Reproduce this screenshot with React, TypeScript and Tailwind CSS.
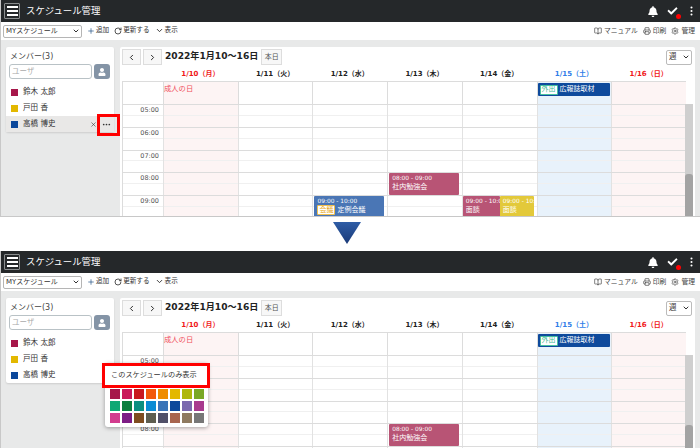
import React from 'react'
import { FaBell, FaCheck, FaUser } from 'react-icons/fa'
import { BsThreeDotsVertical, BsThreeDots } from 'react-icons/bs'
import { BookOpen, ChevronDown, ChevronLeft, ChevronRight, Plus, Printer, RotateCw, Settings, X } from 'lucide-react'

const days = [
    { label: '1/10（月）', color: 'text-[#f01818]', bg: 'bg-[#fdf4f4]' },
    { label: '1/11（火）', color: 'text-[#222]', bg: 'bg-white' },
    { label: '1/12（水）', color: 'text-[#222]', bg: 'bg-white' },
    { label: '1/13（木）', color: 'text-[#222]', bg: 'bg-white' },
    { label: '1/14（金）', color: 'text-[#222]', bg: 'bg-white' },
    { label: '1/15（土）', color: 'text-[#2f7de8]', bg: 'bg-[#e8f2fb]' },
    { label: '1/16（日）', color: 'text-[#f01818]', bg: 'bg-[#fdf4f4]' },
]

const hours = ['05:00', '06:00', '07:00', '08:00', '09:00']

const members = [
    { name: '鈴木 太郎', color: 'bg-[#a6174a]' },
    { name: '戸田 香', color: 'bg-[#e3b800]' },
    { name: '高橋 博史', color: 'bg-[#0c489b]' },
]

const palette = [
    ['bg-[#a6174a]', 'bg-[#c91a5b]', 'bg-[#c8181f]', 'bg-[#f25a0a]', 'bg-[#ef8c00]', 'bg-[#e3b800]', 'bg-[#afb70c]', 'bg-[#7aa825]'],
    ['bg-[#0fa874]', 'bg-[#0d7f3f]', 'bg-[#0c8f80]', 'bg-[#0b8bd4]', 'bg-[#3a74b8]', 'bg-[#0c489b]', 'bg-[#7a68ae]', 'bg-[#a83a8e]'],
    ['bg-[#d23c8e]', 'bg-[#7d1d85]', 'bg-[#7f4d20]', 'bg-[#5e5e50]', 'bg-[#505068]', 'bg-[#a8654f]', 'bg-[#8f7a60]', 'bg-[#777777]'],
]

const Header = () => (
    <div className="h-[22px] bg-[#25282a] flex items-center pl-[3px] text-white shrink-0">
        <div className="w-[16px] h-[16px] border border-[#8a8d8e] rounded-[1px] flex flex-col items-center justify-center gap-[2px]">
            <span className="w-[11px] h-[2px] bg-white" />
            <span className="w-[11px] h-[2px] bg-white" />
            <span className="w-[11px] h-[2px] bg-white" />
        </div>
        <span className="ml-[6px] text-[9.4px]">スケジュール管理</span>
        <div className="ml-auto flex items-center">
            <FaBell className="w-[10px] h-[11px]" />
            <div className="relative ml-[9px]">
                <FaCheck className="w-[11px] h-[10px]" />
                <span className="absolute right-[-3px] bottom-[-3px] w-[5px] h-[5px] rounded-full bg-[#f00]" />
            </div>
            <BsThreeDotsVertical className="ml-[8px] mr-[3px] w-[11px] h-[12px]" />
        </div>
    </div>
)

const Toolbar = () => (
    <div className="h-[18px] bg-white flex items-center pl-[2px] pr-[5px] text-[6.6px] text-[#333] shrink-0">
        <div className="w-[79px] h-[13px] border border-[#b5b5b5] rounded-[2px] flex items-center justify-between pl-[2px] pr-[1px] text-[7px]">
            <span>MYスケジュール</span>
            <ChevronDown className="w-[8px] h-[8px]" strokeWidth={3} />
        </div>
        <div className="ml-[5px] flex items-center">
            <Plus className="w-[8px] h-[8px] text-[#1c4c80]" strokeWidth={2} />
            <span className="ml-[1px]">追加</span>
        </div>
        <div className="ml-[5px] flex items-center">
            <RotateCw className="w-[8px] h-[8px]" strokeWidth={2.5} />
            <span className="ml-[1px]">更新する</span>
        </div>
        <div className="ml-[5px] flex items-center">
            <ChevronDown className="w-[9px] h-[9px]" strokeWidth={2.5} />
            <span className="ml-[1px]">表示</span>
        </div>
        <div className="ml-auto flex items-center text-[#444] text-[6.8px]">
            <BookOpen className="w-[8px] h-[8px]" />
            <span className="ml-[2px]">マニュアル</span>
            <Printer className="ml-[5px] w-[8px] h-[8px]" />
            <span className="ml-[2px]">印刷</span>
            <Settings className="ml-[5px] w-[8px] h-[8px]" />
            <span className="ml-[2px]">管理</span>
        </div>
    </div>
)

const Sidebar = ({ active }: { active: boolean }) => (
    <div className="relative z-10 w-[108px] self-start bg-white rounded-[2px] shadow-[0_1px_2px_rgba(0,0,0,0.12)]">
        <div className="pl-[4px] pt-[5px] text-[8px] leading-[10px] text-[#444]">メンバー(3)</div>
        <div className="flex pl-[3px] pt-[2px] gap-[2px]">
            <div className="w-[83px] h-[15px] border border-[#b9c2c6] rounded-[3px] pl-[2px] text-[7.5px] leading-[13px] text-[#aaa]">ユーザ</div>
            <div className="w-[16px] h-[15px] rounded-[3px] bg-[#8494a6] flex items-center justify-center">
                <FaUser className="w-[8px] h-[8px] text-white" />
            </div>
        </div>
        <div className="mt-[5px]">
            {members.map((m, i) => {
                const highlighted = active && i === 2
                return (
                    <div key={m.name} className={`h-[16px] flex items-center pl-[5px] text-[7.5px] text-[#333] ${highlighted ? 'bg-[#e9e8e7]' : ''}`}>
                        <span className={`w-[7px] h-[7px] ${m.color}`} />
                        <span className="ml-[5px]">{m.name}</span>
                        {highlighted && (
                            <div className="ml-auto flex items-center pr-[1px]">
                                <X className="w-[7px] h-[7px]" strokeWidth={2} />
                                <BsThreeDots className="ml-[5px] mr-[2px] w-[9px] h-[9px]" />
                            </div>
                        )}
                    </div>
                )
            })}
        </div>
        {active && <div className="absolute left-[91px] top-[67px] w-[23px] h-[22px] border-[3px] border-[#f00]" />}
    </div>
)

const Tag = ({ text, tone }: { text: string; tone: 'teal' | 'yellow' }) => (
    <span className={`inline-flex items-center justify-center w-[18px] h-[10px] bg-white border text-[7px] rounded-[1px] ${tone === 'teal' ? 'border-[#49c2a0] text-[#3bb894]' : 'border-[#f2c14e] text-[#e9a820]'}`}>
        {text}
    </span>
)

const TimedEvent = ({ time, title, bg, tag, className }: { time: string; title: string; bg: string; tag?: string; className: string }) => (
    <div className={`absolute top-0 z-[1] h-[22px] overflow-hidden whitespace-nowrap pl-[3px] text-white rounded-[1px] ${bg} ${className}`}>
        <div className="text-[5.9px] leading-[8px] mt-[1px]">{time}</div>
        <div className="flex items-center gap-[2px] text-[7px] leading-[10px]">
            {tag && <Tag text={tag} tone="yellow" />}
            <span>{title}</span>
        </div>
    </div>
)

const Calendar = ({ active }: { active: boolean }) => (
    <div className="flex-1 h-full bg-white rounded-t-[2px] pl-[2px] relative">
        <div className="flex items-center pt-[2px] h-[18px]">
            <div className="w-[19px] h-[16px] border border-[#ddd] bg-[#f7f7f7] flex items-center justify-center">
                <ChevronLeft className="w-[9px] h-[9px] text-[#222]" strokeWidth={2.5} />
            </div>
            <div className="ml-[2px] w-[19px] h-[16px] border border-[#ddd] bg-[#f7f7f7] flex items-center justify-center">
                <ChevronRight className="w-[9px] h-[9px] text-[#222]" strokeWidth={2.5} />
            </div>
            <span className="ml-[3px] text-[9.1px] font-bold text-[#222]">2022年1月10～16日</span>
            <div className="ml-[3px] w-[21px] h-[16px] border border-[#ddd] bg-[#f7f7f7] text-[7px] text-[#555] flex items-center justify-center">本日</div>
            <div className="ml-auto mr-[3px] w-[26px] h-[15px] border border-[#bbb] rounded-[2px] flex items-center justify-between pl-[2px] pr-[1px] text-[7.5px] text-[#333]">
                <span>週</span>
                <ChevronDown className="w-[8px] h-[8px]" strokeWidth={3} />
            </div>
        </div>
        <div className="w-[564px] grid grid-cols-[41px_repeat(7,1fr)] h-[16px] items-center pt-[3px]">
            <div />
            {days.map(d => (
                <div key={d.label} className={`text-center text-[7px] font-bold ${d.color}`}>{d.label}</div>
            ))}
        </div>
        <div className="w-[564px] relative border-t border-l border-[#dcdcdc]">
            <div className="grid grid-cols-[40px_repeat(7,1fr)] h-[22px]">
                <div />
                {days.map((d, i) => (
                    <div key={d.label} className={`relative border-l border-[#dcdcdc] ${d.bg}`}>
                        {i === 0 && <span className="text-[7.3px] leading-[10px] text-[#f0505c] block mt-[2px]">成人の日</span>}
                        {i === 5 && (
                            <div className="absolute left-0 right-[1px] top-[1px] h-[13px] bg-[#0e4a9c] rounded-[1px] flex items-center gap-[2px] pl-[2px] text-[7px] text-white">
                                <Tag text="外出" tone="teal" />
                                <span>広報誌取材</span>
                            </div>
                        )}
                    </div>
                ))}
            </div>
            {hours.map(h => (
                <div key={h} className="grid grid-cols-[40px_repeat(7,1fr)] h-[22.75px] border-t border-[#dcdcdc]">
                    <div className="relative">
                        <div className="h-1/2 border-b border-[#f0f0f0] text-right pr-[4px] text-[6.5px] leading-[11px] text-[#555]">{h}</div>
                    </div>
                    {days.map((d, i) => (
                        <div key={d.label} className={`relative border-l border-[#e2e2e2] ${d.bg}`}>
                            <div className="h-1/2 border-b border-[#f0f0f0]" />
                            {active && h === '09:00' && i === 2 && (
                                <TimedEvent time="09:00 - 10:00" title="定例会議" tag="会議" bg="bg-[#4a76b5]" className="left-[1px] right-[3px]" />
                            )}
                            {h === '08:00' && i === 3 && (
                                <TimedEvent time="08:00 - 09:00" title="社内勉強会" bg="bg-[#b85475]" className="left-[1px] right-[3px]" />
                            )}
                            {active && h === '09:00' && i === 4 && (
                                <>
                                    <TimedEvent time="09:00 - 10:00" title="面談" bg="bg-[#b85475]" className="left-0 w-[37px]" />
                                    <TimedEvent time="09:00 - 10:00" title="面談" bg="bg-[#e3c93a]" className="left-[37px] w-[34px]" />
                                </>
                            )}
                        </div>
                    ))}
                </div>
            ))}
            <div className="absolute right-0 top-[22px] bottom-0 w-[8px] translate-x-[7px] bg-[#cfcfcf] z-[2]">
                <div className="mt-[70px] h-[60px] bg-[#a3a3a3] rounded-t-[3px]" />
            </div>
        </div>
    </div>
)

const Popup = () => (
    <div className="absolute left-[104px] top-[112px] z-20 w-[103px] h-[64px] bg-white rounded-[3px] shadow-[0_1px_4px_rgba(0,0,0,0.35)]">
        <div className="absolute left-[-3px] top-0 w-[108px] h-[25px] border-[3px] border-[#f00] flex items-center pl-[6px] text-[7.2px] text-[#333]">
            このスケジュールのみ表示
        </div>
        <div className="pt-[26px] pl-[5px] flex flex-col gap-[2px]">
            {palette.map((row, i) => (
                <div key={i} className="flex gap-[2px]">
                    {row.map(c => (
                        <span key={c} className={`w-[10px] h-[10px] ${c}`} />
                    ))}
                </div>
            ))}
        </div>
    </div>
)

const Panel = ({ active, className }: { active: boolean; className: string }) => (
    <div className={`relative flex flex-col overflow-hidden border-l border-[#c8c8c8] ${className}`}>
        <Header />
        <Toolbar />
        <div className="flex-1 min-h-0 bg-[#e8e9e9] flex gap-[6px] pl-[5px] pr-[5px] pt-[7px]">
            <Sidebar active={active} />
            <Calendar active={active} />
        </div>
        {!active && <Popup />}
    </div>
)

const App = () => {
    return (
        <div className="w-[700px] h-[448px] overflow-hidden bg-white flex flex-col font-['DejaVu_Sans','Noto_Sans_CJK_JP',sans-serif]">
            <Panel active className="h-[217px] border-b border-b-[#c8c8c8]" />
            <div className="h-[34px] flex items-center justify-center pr-[6px]">
                <svg width="28" height="24" viewBox="0 0 28 24">
                    <defs>
                        <linearGradient id="arrow" x1="0" y1="0" x2="0" y2="1">
                            <stop offset="0" stopColor="#2f5da6" />
                            <stop offset="1" stopColor="#1a3a78" />
                        </linearGradient>
                    </defs>
                    <path d="M0 0H28L14 22Z" fill="url(#arrow)" />
                </svg>
            </div>
            <Panel active={false} className="h-[197px]" />
        </div>
    )
}

export default App
